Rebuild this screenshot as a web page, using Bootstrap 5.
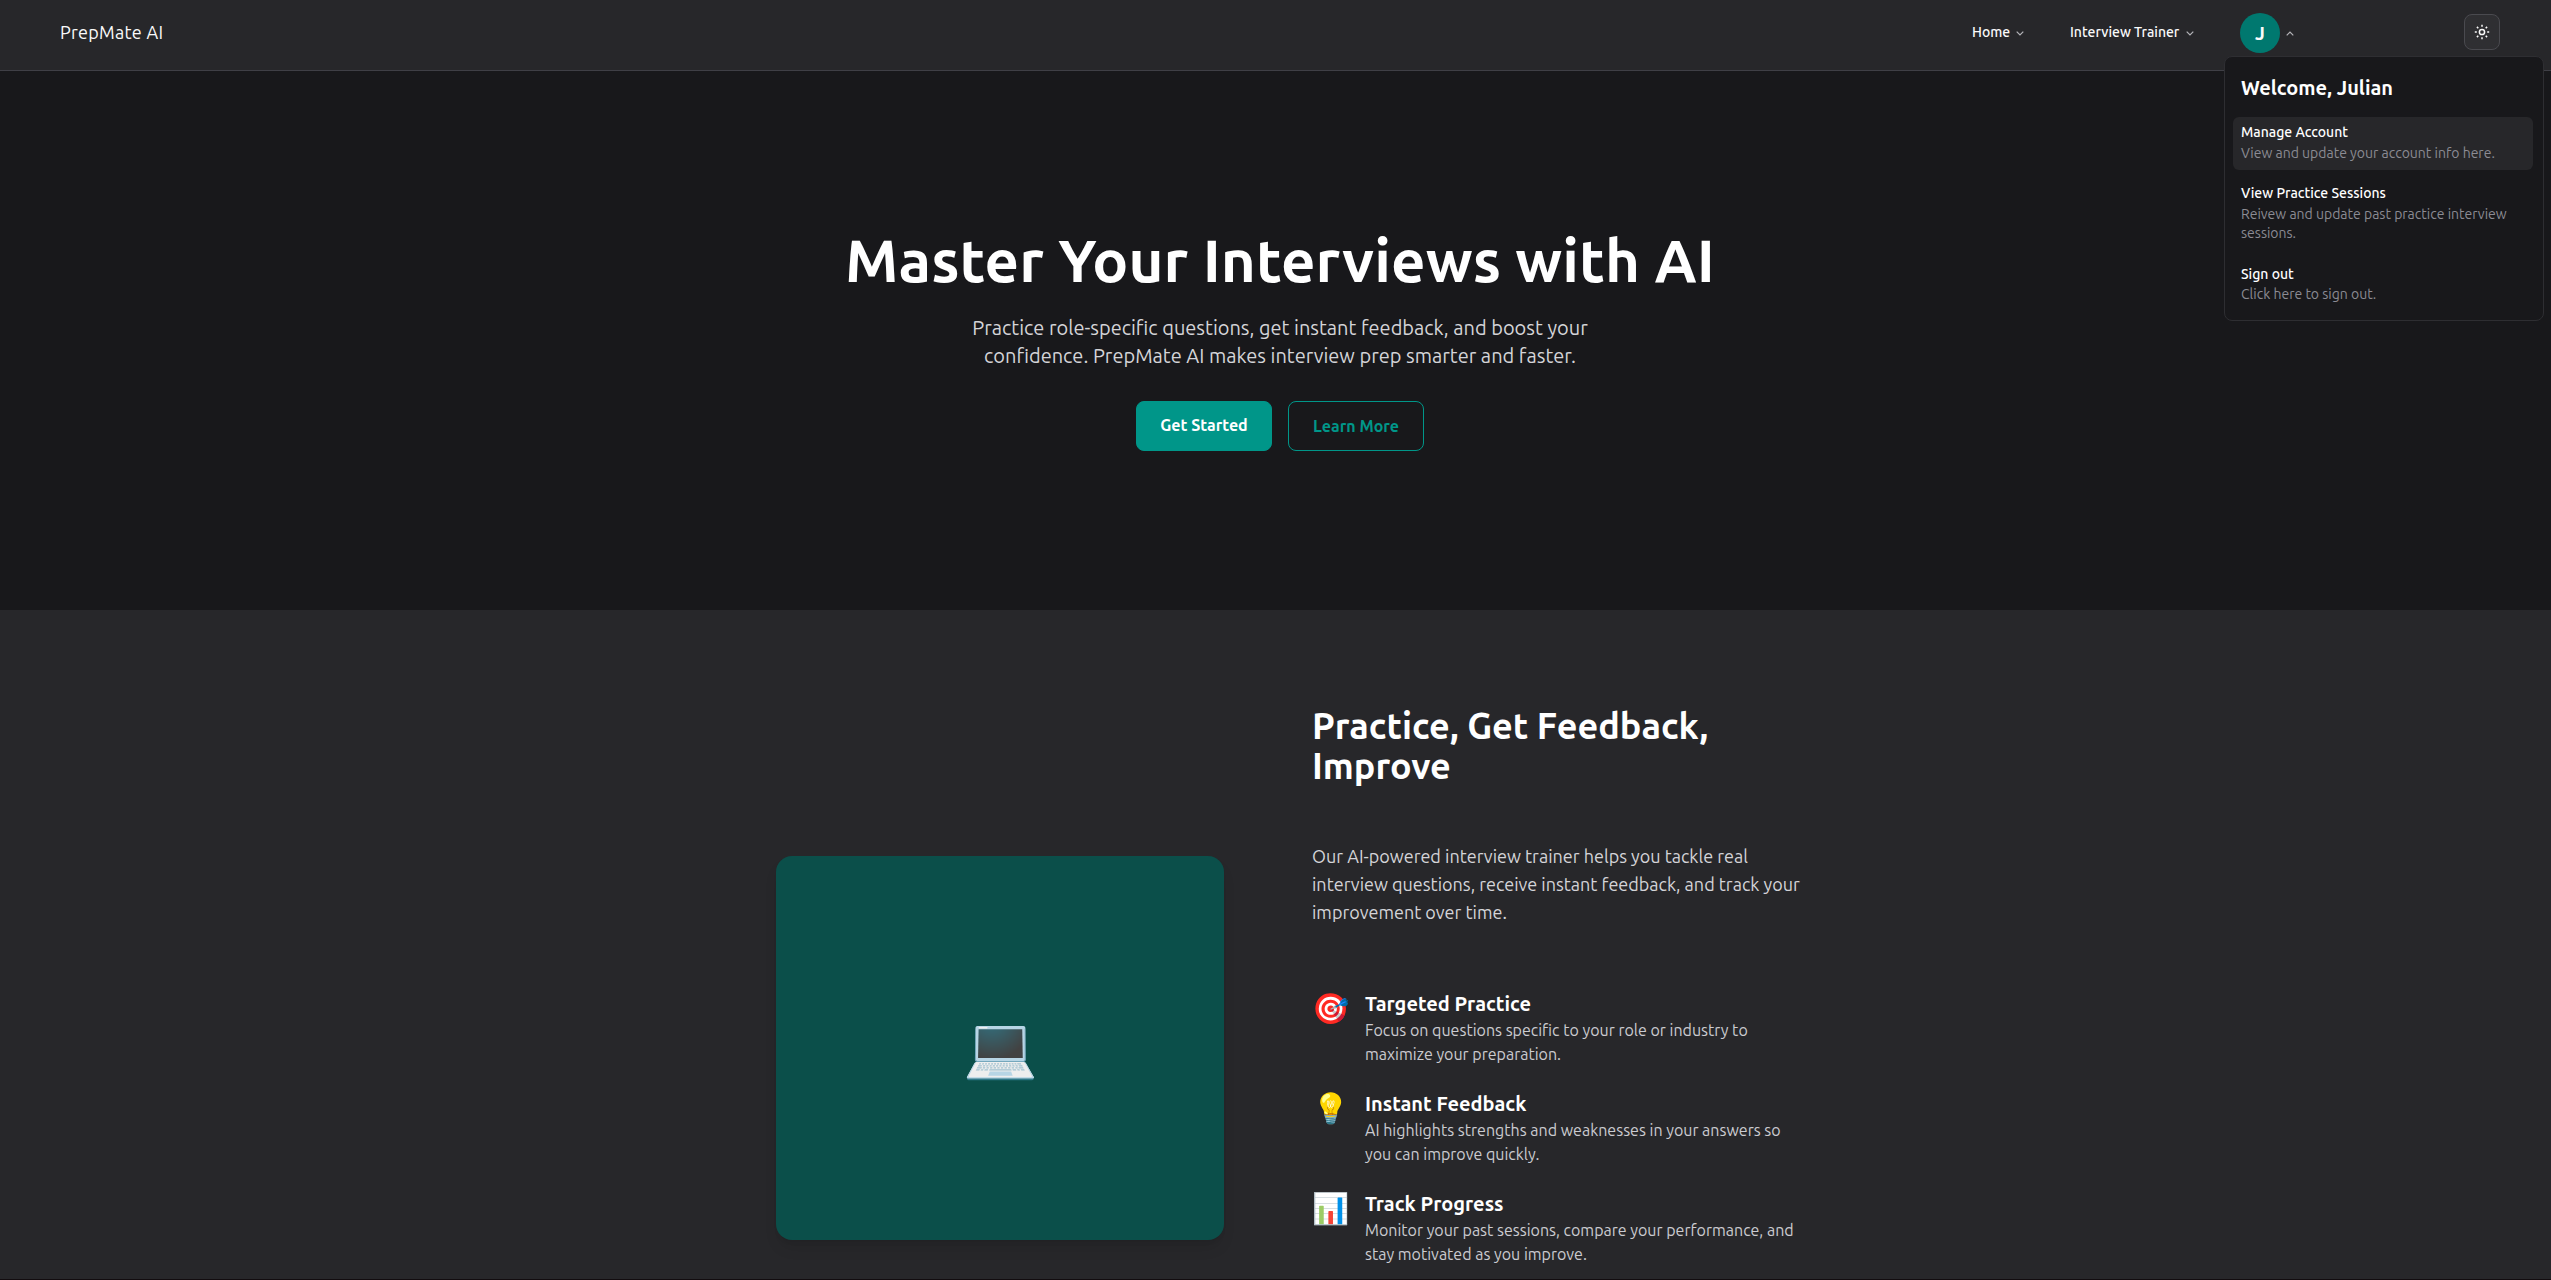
<!DOCTYPE html>
<html lang="en">
<head>
<meta charset="utf-8">
<meta name="viewport" content="width=device-width, initial-scale=1">
<title>PrepMate AI</title>
<link href="https://cdn.jsdelivr.net/npm/bootstrap@5.3.0/dist/css/bootstrap.min.css" rel="stylesheet">
<style>
  body { font-family: Ubuntu, "Noto Sans", "Noto Color Emoji", sans-serif; background: #18181b; color: #fff; height: 1280px; overflow: hidden; }
  h1, h2, h3, p { margin: 0; }
  .site-header { height: 71px; padding: 0 51px 6px 60px; background: #27272a; border-bottom: 1px solid #3f3f46; }
  .site-brand { font-size: 18px; font-weight: 400; line-height: 28px; letter-spacing: .27px; color: #fafafa; }
  .main-nav { gap: 46px; margin-right: 170px; font-size: 14px; font-weight: 500; line-height: 20px; }
  .nav-entry { color: #fafafa; text-decoration: none; }
  .entry-home { width: 52px; }
  .entry-trainer { width: 124px; }
  .entry-user { width: 54px; margin-top: 2px; }
  .nav-entry svg { flex: none; margin-top: 2px; }
  .entry-user svg { margin-top: 0; }
  .avatar-disc { width: 40px; height: 40px; background: #00786f; font-size: 19px; font-weight: 600; line-height: 28px; }
  .theme-btn { width: 36px; height: 36px; background: #2f2f32; border: 1px solid #4a4a4f; border-radius: 8px; color: #fafafa; }
  .user-menu { top: 56px; left: 2224px; width: 320px; height: 265px; padding: 17px 10px 0 8px; background: #18181b; border: 1px solid #2e2e32; border-radius: 8px; }
  .menu-title { font-size: 20px; font-weight: 600; line-height: 28px; padding: 0 8px; margin-bottom: 15px; }
  .menu-entry { padding: 5px 8px 7.4px; border-radius: 6px; font-size: 14px; color: #fff; text-decoration: none; }
  .menu-entry.is-active { background: #27272a; }
  .menu-name { font-weight: 500; line-height: 20px; }
  .menu-note { margin-top: 1.6px; line-height: 19.25px; color: #8b8b93; }
  .hero { height: 539px; padding: 159px 0 0 9px; }
  .hero h1 { font-size: 60px; font-weight: 600; line-height: 60px; letter-spacing: .08px; }
  .hero-text { margin-top: 24px; font-size: 20px; line-height: 28px; color: #d4d4d8; }
  .hero-actions { margin-top: 31px; gap: 16px; }
  .hero-actions .btn { width: 136px; height: 50px; border-radius: 8px; font-size: 16px; font-weight: 600; line-height: 24px; padding: 11px 0; }
  .btn-start { background: #009689; border: 1px solid #009689; color: #fff; }
  .hero-actions .btn-learn { border: 1px solid #009689; color: #009689; padding-top: 12px; }
  .feature-band { height: 669px; padding: 95px 0 0 33px; background: #27272a; gap: 88px; }
  .picture-card { width: 448px; height: 384px; margin-top: 151px; padding: 0 0 5px 2px; border-radius: 16px; background: #0b4f4a; font-size: 60px; line-height: 60px; box-shadow: 0 10px 15px -3px rgba(0,0,0,.1), 0 4px 6px -4px rgba(0,0,0,.1); }
  .feature-col { width: 496px; padding-top: 1px; }
  .feature-col h2 { font-size: 36px; font-weight: 600; line-height: 40px; }
  .feature-lead { margin-top: 56px; font-size: 18px; line-height: 28px; color: #d4d4d8; }
  .feature-list { margin-top: 64px; gap: 24px; }
  .feature-icon { width: 37px; font-size: 30px; line-height: 36px; flex: none; }
  .feature-list h3 { font-size: 20px; font-weight: 600; line-height: 28px; }
  .feature-list p { font-size: 16px; line-height: 24px; color: #cbcbd0; }
  .page-edge { height: 1px; background: #120c0f; }
</style>
</head>
<body>
<header class="site-header d-flex align-items-center">
  <span class="site-brand me-auto">PrepMate AI</span>
  <nav class="main-nav d-flex align-items-center">
    <a href="#" class="nav-entry entry-home d-flex align-items-center justify-content-between text-nowrap">Home
      <svg width="8" height="5" viewBox="0 0 8 5" fill="none" stroke="#b4b4b8" stroke-width="1.2"><path d="M.7.7 4 4 7.3.7"/></svg></a>
    <a href="#" class="nav-entry entry-trainer d-flex align-items-center justify-content-between text-nowrap">Interview Trainer
      <svg width="8" height="5" viewBox="0 0 8 5" fill="none" stroke="#b4b4b8" stroke-width="1.2"><path d="M.7.7 4 4 7.3.7"/></svg></a>
    <a href="#" class="nav-entry entry-user d-flex align-items-center justify-content-between">
      <span class="avatar-disc rounded-circle d-flex align-items-center justify-content-center">J</span>
      <svg width="8" height="5" viewBox="0 0 8 5" fill="none" stroke="#b4b4b8" stroke-width="1.2"><path d="M.7 4.3 4 1l3.3 3.3"/></svg></a>
  </nav>
  <button class="theme-btn d-flex align-items-center justify-content-center p-0" aria-label="Toggle theme">
    <svg width="16" height="16" viewBox="0 0 16 16" fill="none" stroke="currentColor" stroke-width="1.5"><circle cx="8" cy="8" r="2.6"/><path d="M8 .8v2M8 13.2v2M.8 8h2M13.2 8h2M2.9 2.9l1.4 1.4M11.7 11.7l1.4 1.4M2.9 13.1l1.4-1.4M11.7 4.3l1.4-1.4"/></svg>
  </button>
</header>
<div class="user-menu position-absolute">
  <h2 class="menu-title">Welcome, Julian</h2>
  <a href="#" class="menu-entry is-active d-block">
    <div class="menu-name">Manage Account</div>
    <div class="menu-note">View and update your account info here.</div>
  </a>
  <a href="#" class="menu-entry d-block mt-2">
    <div class="menu-name">View Practice Sessions</div>
    <div class="menu-note">Reivew and update past practice interview sessions.</div>
  </a>
  <a href="#" class="menu-entry d-block mt-2">
    <div class="menu-name">Sign out</div>
    <div class="menu-note">Click here to sign out.</div>
  </a>
</div>
<main>
  <section class="hero d-flex flex-column align-items-center text-center">
    <h1>Master Your Interviews with AI</h1>
    <p class="hero-text">Practice role-specific questions, get instant feedback, and boost your<br>confidence. PrepMate AI makes interview prep smarter and faster.</p>
    <div class="hero-actions d-flex">
      <a href="#" class="btn btn-start">Get Started</a>
      <a href="#" class="btn btn-learn">Learn More</a>
    </div>
  </section>
  <section class="feature-band d-flex justify-content-center align-items-start">
    <div class="picture-card d-flex align-items-center justify-content-center">💻</div>
    <div class="feature-col">
      <h2>Practice, Get Feedback,<br>Improve</h2>
      <p class="feature-lead">Our AI-powered interview trainer helps you tackle real<br>interview questions, receive instant feedback, and track your<br>improvement over time.</p>
      <div class="feature-list d-flex flex-column">
        <div class="d-flex gap-3">
          <span class="feature-icon">🎯</span>
          <div><h3>Targeted Practice</h3><p>Focus on questions specific to your role or industry to<br>maximize your preparation.</p></div>
        </div>
        <div class="d-flex gap-3">
          <span class="feature-icon">💡</span>
          <div><h3>Instant Feedback</h3><p>AI highlights strengths and weaknesses in your answers so<br>you can improve quickly.</p></div>
        </div>
        <div class="d-flex gap-3">
          <span class="feature-icon">📊</span>
          <div><h3>Track Progress</h3><p>Monitor your past sessions, compare your performance, and<br>stay motivated as you improve.</p></div>
        </div>
      </div>
    </div>
  </section>
  <div class="page-edge"></div>
</main>
<script src="https://cdn.jsdelivr.net/npm/bootstrap@5.3.0/dist/js/bootstrap.bundle.min.js"></script>
</body>
</html>
